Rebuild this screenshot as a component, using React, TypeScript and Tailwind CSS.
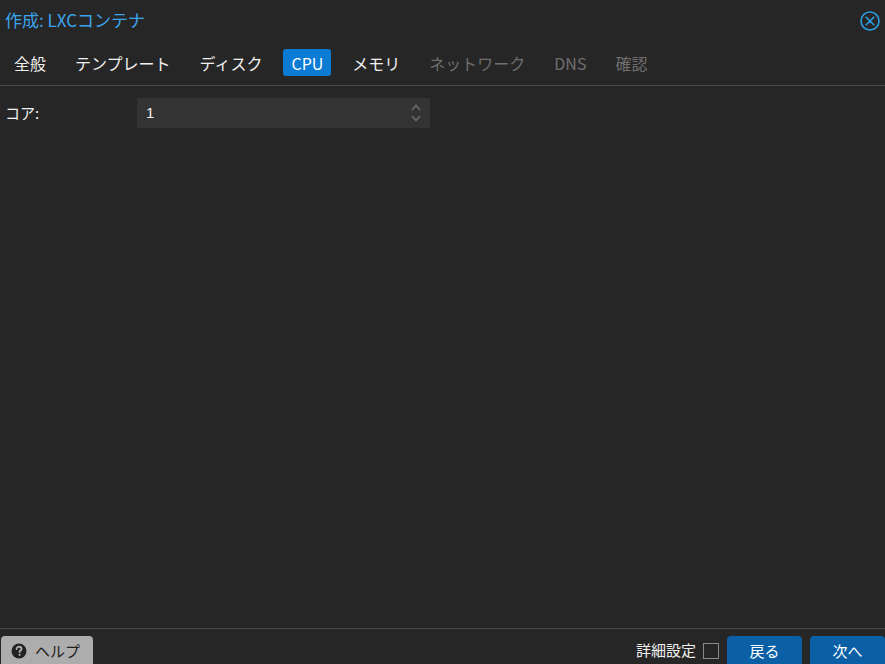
import React from "react";

const tabs: { label: string; active?: boolean; disabled?: boolean }[] = [
  { label: "全般" },
  { label: "テンプレート" },
  { label: "ディスク" },
  { label: "CPU", active: true },
  { label: "メモリ" },
  { label: "ネットワーク", disabled: true },
  { label: "DNS", disabled: true },
  { label: "確認", disabled: true },
];

export default function App() {
  return (
    <div
      className="w-[885px] h-[664px] bg-[#262626] flex flex-col overflow-hidden text-[#f2f2f2]"
      style={{ fontFamily: '"Noto Sans CJK JP", "Noto Sans", sans-serif' }}
    >
      {/* Header */}
      <div className="h-10 flex items-center justify-between pl-[5px] pr-[4px]">
        <div className="text-[17px] text-[#3ba4ec] leading-none -mt-[2px]">作成: LXCコンテナ</div>
        <svg width="22" height="22" viewBox="0 0 22 22" className="mt-[1px]">
          <circle cx="11" cy="11" r="9" fill="none" stroke="#2a9ee0" strokeWidth="1.6" />
          <path d="M7.2 7.2 L14.8 14.8 M14.8 7.2 L7.2 14.8" stroke="#2a9ee0" strokeWidth="1.6" strokeLinecap="round" />
        </svg>
      </div>

      {/* Tabs */}
      <div className="flex items-center gap-[13px] pl-[6px] pt-[9px] pb-[9px] border-b border-[#4a4a4a]">
        {tabs.map((t) => (
          <div
            key={t.label}
            className={
              "h-[27px] px-2 flex items-center rounded-[3px] text-[16px] leading-none " +
              (t.active
                ? "bg-[#0c7bd4] text-white"
                : t.disabled
                ? "text-[#6e6e6e]"
                : "text-[#f0f0f0]")
            }
          >
            {t.label}
          </div>
        ))}
      </div>

      {/* Content */}
      <div className="flex-1 pt-[12px]">
        <div className="flex items-center h-[30px]">
          <div className="w-[137px] pl-[5px] text-[15px]">コア:</div>
          <div className="w-[293px] h-[30px] bg-[#333333] flex items-center justify-between pl-[9px] pr-[8px]">
            <span className="text-[15px]" style={{ fontFamily: '"Liberation Sans", Arial, sans-serif' }}>1</span>
            <svg width="12" height="20" viewBox="0 0 12 20">
              <path d="M2 7 L6 2.5 L10 7" fill="none" stroke="#6a6a6a" strokeWidth="1.6" />
              <path d="M2 13 L6 17.5 L10 13" fill="none" stroke="#6a6a6a" strokeWidth="1.6" />
            </svg>
          </div>
        </div>
      </div>

      {/* Footer */}
      <div className="border-t border-[#4a4a4a] pt-[7px] flex items-start justify-between h-[36px]">
        <div className="ml-[1px] w-[92px] h-[30px] bg-[#adadad] rounded-t-[4px] flex items-center gap-[8px] pl-[10px] text-[#222] text-[15px]">
          <svg width="16" height="16" viewBox="0 0 16 16">
            <circle cx="8" cy="8" r="7.5" fill="#222" />
            <path d="M5.6 6.1 C5.6 4.6 6.7 3.8 8.1 3.8 C9.5 3.8 10.5 4.7 10.5 5.9 C10.5 7.4 8.6 7.6 8.6 9" fill="none" stroke="#adadad" strokeWidth="1.9" strokeLinecap="round" />
            <circle cx="8.6" cy="11.8" r="1.15" fill="#adadad" />
          </svg>
          <span>ヘルプ</span>
        </div>
        <div className="flex items-start">
          <div className="h-[28px] flex items-center text-[15px] text-[#f0f0f0]">詳細設定</div>
          <div className="ml-[7px] mt-[7px] w-[16px] h-[16px] border border-[#8a8a8a]"></div>
          <div className="ml-[8px] w-[75px] h-[30px] bg-[#0a5fa5] rounded-t-[4px] flex items-center justify-center text-[15px] text-white">戻る</div>
          <div className="ml-[8px] w-[75px] h-[30px] bg-[#0a5fa5] rounded-t-[4px] flex items-center justify-center text-[15px] text-white">次へ</div>
        </div>
      </div>
    </div>
  );
}
